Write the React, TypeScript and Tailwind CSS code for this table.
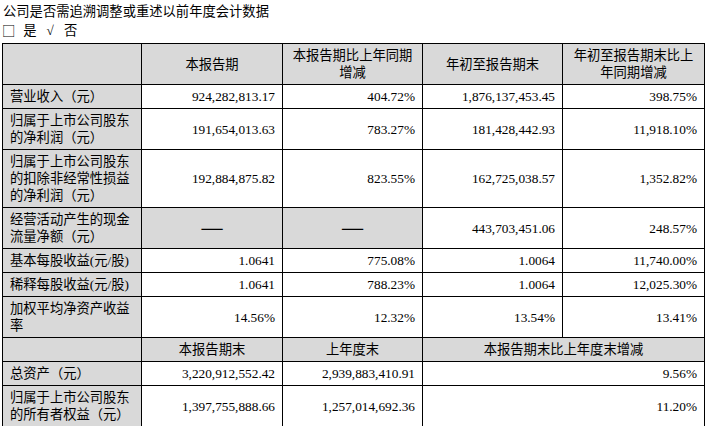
import React from "react";

const G = "bg-[#d9d9d9]";
const cellB = "border border-black px-[7px] py-[3px] align-middle";

type Row = { label: React.ReactNode; v: string[]; grayIdx?: number[] };

const rows: Row[] = [
  { label: "营业收入（元）", v: ["924,282,813.17", "404.72%", "1,876,137,453.45", "398.75%"] },
  { label: <>归属于上市公司股东<br />的净利润（元）</>, v: ["191,654,013.63", "783.27%", "181,428,442.93", "11,918.10%"] },
  { label: <>归属于上市公司股东<br />的扣除非经常性损益<br />的净利润（元）</>, v: ["192,884,875.82", "823.55%", "162,725,038.57", "1,352.82%"] },
  { label: <>经营活动产生的现金<br />流量净额（元）</>, v: ["——", "——", "443,703,451.06", "248.57%"], grayIdx: [0, 1] },
  { label: "基本每股收益(元/股)", v: ["1.0641", "775.08%", "1.0064", "11,740.00%"] },
  { label: "稀释每股收益(元/股)", v: ["1.0641", "788.23%", "1.0064", "12,025.30%"] },
  { label: <>加权平均净资产收益<br />率</>, v: ["14.56%", "12.32%", "13.54%", "13.41%"] },
];

const CJK = { fontFamily: '"Noto Sans CJK SC", sans-serif' };

export default function App() {
  return (
    <div
      className="w-[707px] h-[426px] bg-white text-black text-[13.3px] leading-[17px] overflow-hidden"
      style={{ fontFamily: '"Liberation Serif", "Noto Sans CJK SC", serif' }}
    >
      <div className="pl-[3px] pt-[2px] leading-[19px]">公司是否需追溯调整或重述以前年度会计数据</div>
      <div className="pl-[2px] leading-[19px] flex items-center">
        <span style={CJK}>□</span>
        <span className="ml-[8px]">是</span>
        <span className="ml-[10px]">√</span>
        <span className="ml-[10px]">否</span>
      </div>
      <table className="ml-[2px] mt-[3px] table-fixed border-collapse w-[703px]">
        <colgroup>
          <col className="w-[139px]" />
          <col className="w-[141px]" />
          <col className="w-[140px]" />
          <col className="w-[140px]" />
          <col className="w-[142px]" />
        </colgroup>
        <tbody>
          <tr className="h-[41px]">
            <td className={`${cellB} ${G}`}></td>
            <td className={`${cellB} ${G} text-center`}>本报告期</td>
            <td className={`${cellB} ${G} text-center`}>本报告期比上年同期<br />增减</td>
            <td className={`${cellB} ${G} text-center`}>年初至报告期末</td>
            <td className={`${cellB} ${G} text-center`}>年初至报告期末比上<br />年同期增减</td>
          </tr>
          {rows.map((r, i) => (
            <tr key={i}>
              <td className={`${cellB} ${G} text-left whitespace-nowrap`}>{r.label}</td>
              {r.v.map((x, j) => {
                const gray = r.grayIdx?.includes(j);
                return (
                  <td
                    key={j}
                    className={`${cellB} whitespace-nowrap ${gray ? `${G} text-center` : "text-right"}`}
                  >
                    {gray ? (
                      <span className="font-bold text-black" style={CJK}>
                        {x}
                      </span>
                    ) : (
                      x
                    )}
                  </td>
                );
              })}
            </tr>
          ))}
          <tr>
            <td className={`${cellB} ${G}`}></td>
            <td className={`${cellB} ${G} text-center`}>本报告期末</td>
            <td className={`${cellB} ${G} text-center`}>上年度末</td>
            <td colSpan={2} className={`${cellB} ${G} text-center`}>本报告期末比上年度末增减</td>
          </tr>
          <tr>
            <td className={`${cellB} ${G} text-left`}>总资产（元）</td>
            <td className={`${cellB} text-right`}>3,220,912,552.42</td>
            <td className={`${cellB} text-right`}>2,939,883,410.91</td>
            <td colSpan={2} className={`${cellB} text-right`}>9.56%</td>
          </tr>
          <tr>
            <td className={`${cellB} ${G} text-left whitespace-nowrap`}>归属于上市公司股东<br />的所有者权益（元）</td>
            <td className={`${cellB} text-right`}>1,397,755,888.66</td>
            <td className={`${cellB} text-right`}>1,257,014,692.36</td>
            <td colSpan={2} className={`${cellB} text-right`}>11.20%</td>
          </tr>
        </tbody>
      </table>
    </div>
  );
}
